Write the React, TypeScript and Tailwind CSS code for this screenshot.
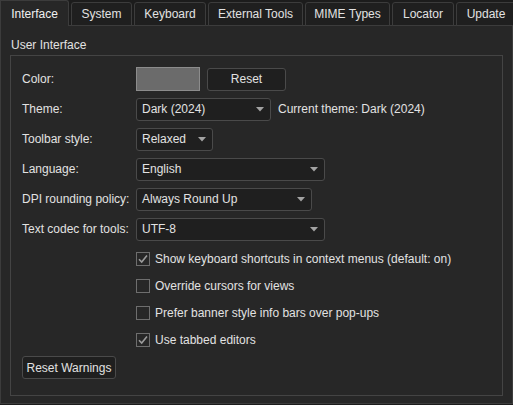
import React from "react";

const tabs = [
  { label: "Interface", w: "w-[69px]" },
  { label: "System", w: "w-[61px]" },
  { label: "Keyboard", w: "w-[72px]" },
  { label: "External Tools", w: "w-[95px]" },
  { label: "MIME Types", w: "w-[85px]" },
  { label: "Locator", w: "w-[62px]" },
  { label: "Update", w: "w-[60px]" },
];

function Arrow() {
  return (
    <svg width="8" height="5" viewBox="0 0 8 5" className="shrink-0">
      <path d="M0 0H8L4 4.5Z" fill="#a3a3a3" />
    </svg>
  );
}

function Combo({ value, w }: { value: string; w: string }) {
  return (
    <div
      className={`${w} flex h-[23px] items-center justify-between rounded-[3px] border border-[#4a4a4a] bg-[#1f1f1f] pr-[6px] pl-[5px]`}
    >
      <span>{value}</span>
      <Arrow />
    </div>
  );
}

function Check({ label, checked }: { label: string; checked?: boolean }) {
  return (
    <div className="flex h-[27px] items-center pl-[114px]">
      <span className="flex h-[14px] w-[14px] items-center justify-center border border-[#6e6e6e] bg-[#272727]">
        {checked ? (
          <svg width="12" height="12" viewBox="0 0 12 12">
            <path d="M2 6.2L4.7 9L10 2.5" fill="none" stroke="#9c9c9c" strokeWidth="1.6" />
          </svg>
        ) : null}
      </span>
      <span className="ml-[5px]">{label}</span>
    </div>
  );
}

function Row({ label, children }: { label: string; children: React.ReactNode }) {
  return (
    <div className="flex h-[30px] items-center">
      <span className="w-[114px] shrink-0">{label}</span>
      {children}
    </div>
  );
}

export default function App() {
  return (
    <div className="h-[405px] w-[513px] overflow-hidden bg-[#1c1c1c] font-['Liberation_Sans',sans-serif] text-[12px] text-[#e2e2e2]">
      {/* tab bar */}
      <div className="relative z-10 flex h-[26px] items-end">
        {tabs.map((t, i) =>
          i === 0 ? (
            <div
              key={t.label}
              className={`${t.w} flex h-[26px] shrink-0 items-center justify-center rounded-tr-[3px] border-t border-r border-l border-[#3c3c3c] bg-[#272727] text-[#f0f0f0]`}
            >
              {t.label}
            </div>
          ) : (
            <div
              key={t.label}
              className={`${t.w} ml-[2px] flex h-[24px] shrink-0 items-center justify-center rounded-t-[3px] border border-[#3c3c3c] bg-[#1f1f1f]`}
            >
              {t.label}
            </div>
          )
        )}
      </div>

      {/* page */}
      <div className="-mt-[1px] h-[379px] border border-[#3c3c3c] bg-[#272727] px-[9px] pt-[10px]">
        <div className="pl-[1px] leading-[18px]">User Interface</div>
        <div className="mt-[1px] h-[341px] border border-[#444] px-[11px] pt-[8px]">
          <Row label="Color:">
            <div className="h-[24px] w-[64px] border border-[#8c8c8c] bg-[#6b6b6b]" />
            <div className="ml-[7px] flex h-[23px] w-[79px] items-center justify-center rounded-[3px] border border-[#4a4a4a] bg-[#1f1f1f]">
              Reset
            </div>
          </Row>
          <Row label="Theme:">
            <Combo value="Dark (2024)" w="w-[135px]" />
            <span className="ml-[7px]">Current theme: Dark (2024)</span>
          </Row>
          <Row label="Toolbar style:">
            <Combo value="Relaxed" w="w-[77px]" />
          </Row>
          <Row label="Language:">
            <Combo value="English" w="w-[189px]" />
          </Row>
          <Row label="DPI rounding policy:">
            <Combo value="Always Round Up" w="w-[176px]" />
          </Row>
          <Row label="Text codec for tools:">
            <Combo value="UTF-8" w="w-[189px]" />
          </Row>
          <div className="h-[1px]" />
          <Check label="Show keyboard shortcuts in context menus (default: on)" checked />
          <Check label="Override cursors for views" />
          <Check label="Prefer banner style info bars over pop-ups" />
          <Check label="Use tabbed editors" checked />
          <div className="mt-[3px] flex h-[23px] w-[94px] items-center justify-center rounded-[3px] border border-[#4a4a4a] bg-[#1f1f1f]">
            Reset Warnings
          </div>
        </div>
      </div>
    </div>
  );
}
